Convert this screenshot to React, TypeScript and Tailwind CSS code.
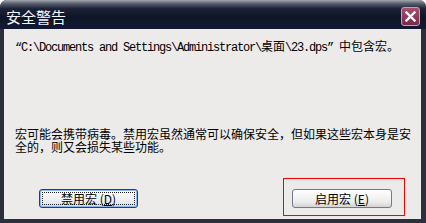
import React from "react";

export default function App() {
  return (
    <div className="w-[426px] h-[223px] bg-[#2c303a] rounded-t-[7px] flex flex-col overflow-hidden font-['Noto_Sans_CJK_SC','Liberation_Sans',sans-serif]">
      <div className="h-[29px] shrink-0 flex items-center justify-between pl-[6px] pr-[6px] bg-[linear-gradient(to_bottom,#a3a8b0_0%,#5a6070_12%,#1c2235_30%,#0f1529_60%,#111a32_100%)]">
        <span className="text-[#f4f6ff] text-[15px] leading-[15px] pt-[3px]">安全警告</span>
        <div className="w-[19px] h-[19px] mt-[3px] rounded-[3px] border border-[#c9a0b0] bg-[linear-gradient(to_bottom,#a8506e,#7a2a48)] flex items-center justify-center">
          <svg width="11" height="11" viewBox="0 0 11 11">
            <path d="M1.5 1.5 L9.5 9.5 M9.5 1.5 L1.5 9.5" stroke="#ffffff" strokeWidth="2.4" strokeLinecap="square" />
          </svg>
        </div>
      </div>
      <div className="flex-1 ml-[4px] mr-[5px] mb-[4px] bg-[#ecebea] flex flex-col pl-[11px] pt-[10px] text-[12px] text-black">
        <div className="h-[13px] leading-[13px] whitespace-nowrap">
          <span className="font-['Liberation_Mono','Noto_Sans_CJK_SC',monospace] tracking-[-1.2px]">“C:\Documents and Settings\Administrator\</span>
          <span>桌面</span>
          <span className="font-['Liberation_Mono','Noto_Sans_CJK_SC',monospace] tracking-[-1.2px]">\23.dps” </span>
          <span>中包含宏。</span>
        </div>
        <div className="mt-[75px] leading-[13px] text-[12px] whitespace-pre-line">
          {"宏可能会携带病毒。禁用宏虽然通常可以确保安全，但如果这些宏本身是安\n全的，则又会损失某些功能。"}
        </div>
        <div className="mt-[25px] flex justify-between items-start">
          <button className="mt-[11px] ml-[24px] w-[99px] h-[19px] rounded-[3px] border border-[#1c3f7a] bg-[linear-gradient(to_bottom,#ffffff,#e4e8ee_80%,#cdd6e4)] shadow-[inset_0_0_0_1px_#90b8ec] p-[2px]">
            <div className="w-full h-full border border-dotted border-[#222] flex items-center justify-center text-[12px] leading-[12px]">
              禁用宏&nbsp;(<span className="underline">D</span>)
            </div>
          </button>
          <div className="mr-[16px] border border-[#ff0000] pt-[10px] pl-[8px] pr-[12px] pb-[7px]">
            <button className="w-[100px] h-[19px] rounded-[3px] border border-[#6f7b88] bg-[linear-gradient(to_bottom,#ffffff,#ececec_70%,#d4d4d4)] flex items-center justify-center text-[12px] leading-[12px]">
              启用宏&nbsp;(<span className="underline">E</span>)
            </button>
          </div>
        </div>
      </div>
    </div>
  );
}
